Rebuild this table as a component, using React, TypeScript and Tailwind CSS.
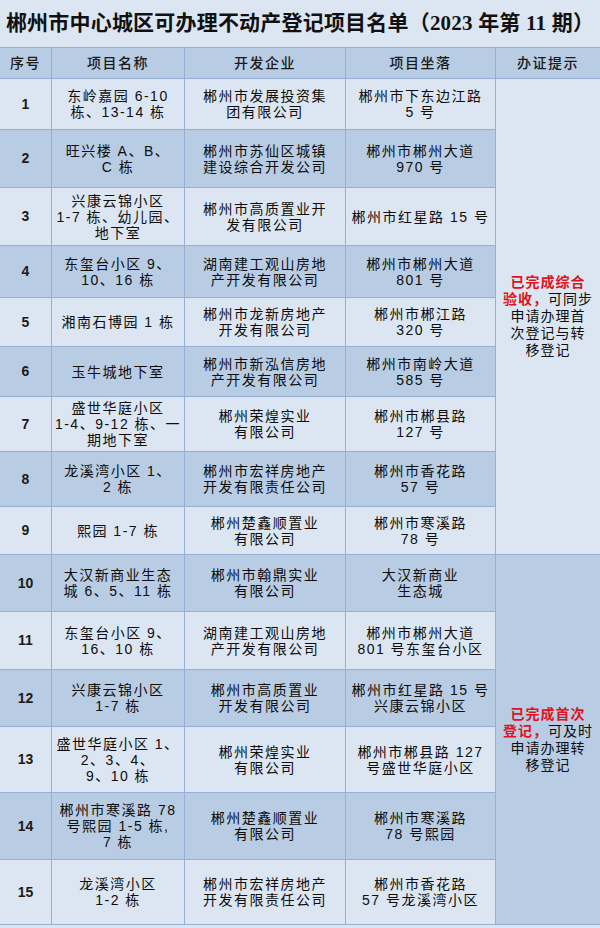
import React from "react";

type Row = { n: string; name: string[]; dev: string[]; loc: string[] };

const rows: Row[] = [
  { n: "1", name: ["东岭嘉园 6-10", "栋、13-14 栋"], dev: ["郴州市发展投资集", "团有限公司"], loc: ["郴州市下东边江路", "5 号"] },
  { n: "2", name: ["旺兴楼 A、B、", "C 栋"], dev: ["郴州市苏仙区城镇", "建设综合开发公司"], loc: ["郴州市郴州大道", "970 号"] },
  { n: "3", name: ["兴康云锦小区", "1-7 栋、幼儿园、", "地下室"], dev: ["郴州市高质置业开", "发有限公司"], loc: ["郴州市红星路 15 号"] },
  { n: "4", name: ["东玺台小区 9、", "10、16 栋"], dev: ["湖南建工观山房地", "产开发有限公司"], loc: ["郴州市郴州大道", "801 号"] },
  { n: "5", name: ["湘南石博园 1 栋"], dev: ["郴州市龙新房地产", "开发有限公司"], loc: ["郴州市郴江路", "320 号"] },
  { n: "6", name: ["玉牛城地下室"], dev: ["郴州市新泓信房地", "产开发有限公司"], loc: ["郴州市南岭大道", "585 号"] },
  { n: "7", name: ["盛世华庭小区", "1-4、9-12 栋、一", "期地下室"], dev: ["郴州荣煌实业", "有限公司"], loc: ["郴州市郴县路", "127 号"] },
  { n: "8", name: ["龙溪湾小区 1、", "2 栋"], dev: ["郴州市宏祥房地产", "开发有限责任公司"], loc: ["郴州市香花路", "57 号"] },
  { n: "9", name: ["熙园 1-7 栋"], dev: ["郴州楚鑫顺置业", "有限公司"], loc: ["郴州市寒溪路", "78 号"] },
  { n: "10", name: ["大汉新商业生态", "城 6、5、11 栋"], dev: ["郴州市翰鼎实业", "有限公司"], loc: ["大汉新商业", "生态城"] },
  { n: "11", name: ["东玺台小区 9、", "16、10 栋"], dev: ["湖南建工观山房地", "产开发有限公司"], loc: ["郴州市郴州大道", "801 号东玺台小区"] },
  { n: "12", name: ["兴康云锦小区", "1-7 栋"], dev: ["郴州市高质置业", "开发有限公司"], loc: ["郴州市红星路 15 号", "兴康云锦小区"] },
  { n: "13", name: ["盛世华庭小区 1、", "2、3、4、", "9、10 栋"], dev: ["郴州荣煌实业", "有限公司"], loc: ["郴州市郴县路 127", "号盛世华庭小区"] },
  { n: "14", name: ["郴州市寒溪路 78", "号熙园 1-5 栋,", "7 栋"], dev: ["郴州楚鑫顺置业", "有限公司"], loc: ["郴州市寒溪路", "78 号熙园"] },
  { n: "15", name: ["龙溪湾小区", "1-2 栋"], dev: ["郴州市宏祥房地产", "开发有限责任公司"], loc: ["郴州市香花路", "57 号龙溪湾小区"] },
];

const body = { fontFamily: '"Liberation Sans", "Noto Sans CJK SC", sans-serif' };

function Lines({ lines }: { lines: string[] }) {
  return (
    <div className="text-center text-[14px] leading-[16px] tracking-[1.5px] text-[#0d0d0d]" style={body}>
      {lines.map((l, i) => (
        <div key={i}>{l}</div>
      ))}
    </div>
  );
}

export default function App() {
  return (
    <div className="w-[600px] h-[928px] bg-[#dce6f2] overflow-hidden" style={body}>
      <div className="h-[48px] flex items-center justify-center border-b border-[#95b0d4] bg-[#dce6f2]">
        <div
          className="text-[21px] font-bold text-[#111] whitespace-nowrap tracking-[0.2px]"
          style={{ fontFamily: '"Liberation Serif", "Noto Sans CJK SC", serif' }}
        >
          郴州市中心城区可办理不动产登记项目名单（2023 年第 11 期）
        </div>
      </div>
      <div className="grid grid-cols-[51px_132px_160px_149px_104px] grid-rows-[30px_50px_57px_57px_51px_48px_49px_54px_54px_47px_56px_57px_56px_65px_66px_64px] gap-px bg-[#95b0d4] border-b border-[#95b0d4]">
        {["序号", "项目名称", "开发企业", "项目坐落", "办证提示"].map((h) => (
          <div
            key={h}
            className="bg-[#b8cce4] flex items-center justify-center text-[14px] font-medium tracking-[1.5px] text-[#1a1a1a]"
          >
            {h}
          </div>
        ))}
        {rows.map((r, i) => {
          const bg = i % 2 === 0 ? "bg-[#dce6f2]" : "bg-[#b8cce4]";
          return (
            <React.Fragment key={r.n}>
              <div className={`${bg} flex items-center justify-center text-[14px] font-bold text-[#1a1a1a]`}>
                {r.n}
              </div>
              <div className={`${bg} flex items-center justify-center`}>
                <Lines lines={r.name} />
              </div>
              <div className={`${bg} flex items-center justify-center`}>
                <Lines lines={r.dev} />
              </div>
              <div className={`${bg} flex items-center justify-center`}>
                <Lines lines={r.loc} />
              </div>
              {i === 0 && (
                <div className="col-start-5 row-span-9 bg-[#dce6f2] flex items-center justify-center">
                  <div className="text-center text-[14px] leading-[17px] tracking-[1px] text-[#0d0d0d]">
                    <div className="text-[#e0121c] font-bold">已完成综合</div>
                    <div>
                      <span className="text-[#e0121c] font-bold">验收，</span>可同步
                    </div>
                    <div>申请办理首</div>
                    <div>次登记与转</div>
                    <div>移登记</div>
                  </div>
                </div>
              )}
              {i === 9 && (
                <div className="col-start-5 row-span-6 bg-[#b8cce4] flex items-center justify-center">
                  <div className="text-center text-[14px] leading-[17px] tracking-[1px] text-[#0d0d0d]">
                    <div className="text-[#e0121c] font-bold">已完成首次</div>
                    <div>
                      <span className="text-[#e0121c] font-bold">登记，</span>可及时
                    </div>
                    <div>申请办理转</div>
                    <div>移登记</div>
                  </div>
                </div>
              )}
            </React.Fragment>
          );
        })}
      </div>
    </div>
  );
}
